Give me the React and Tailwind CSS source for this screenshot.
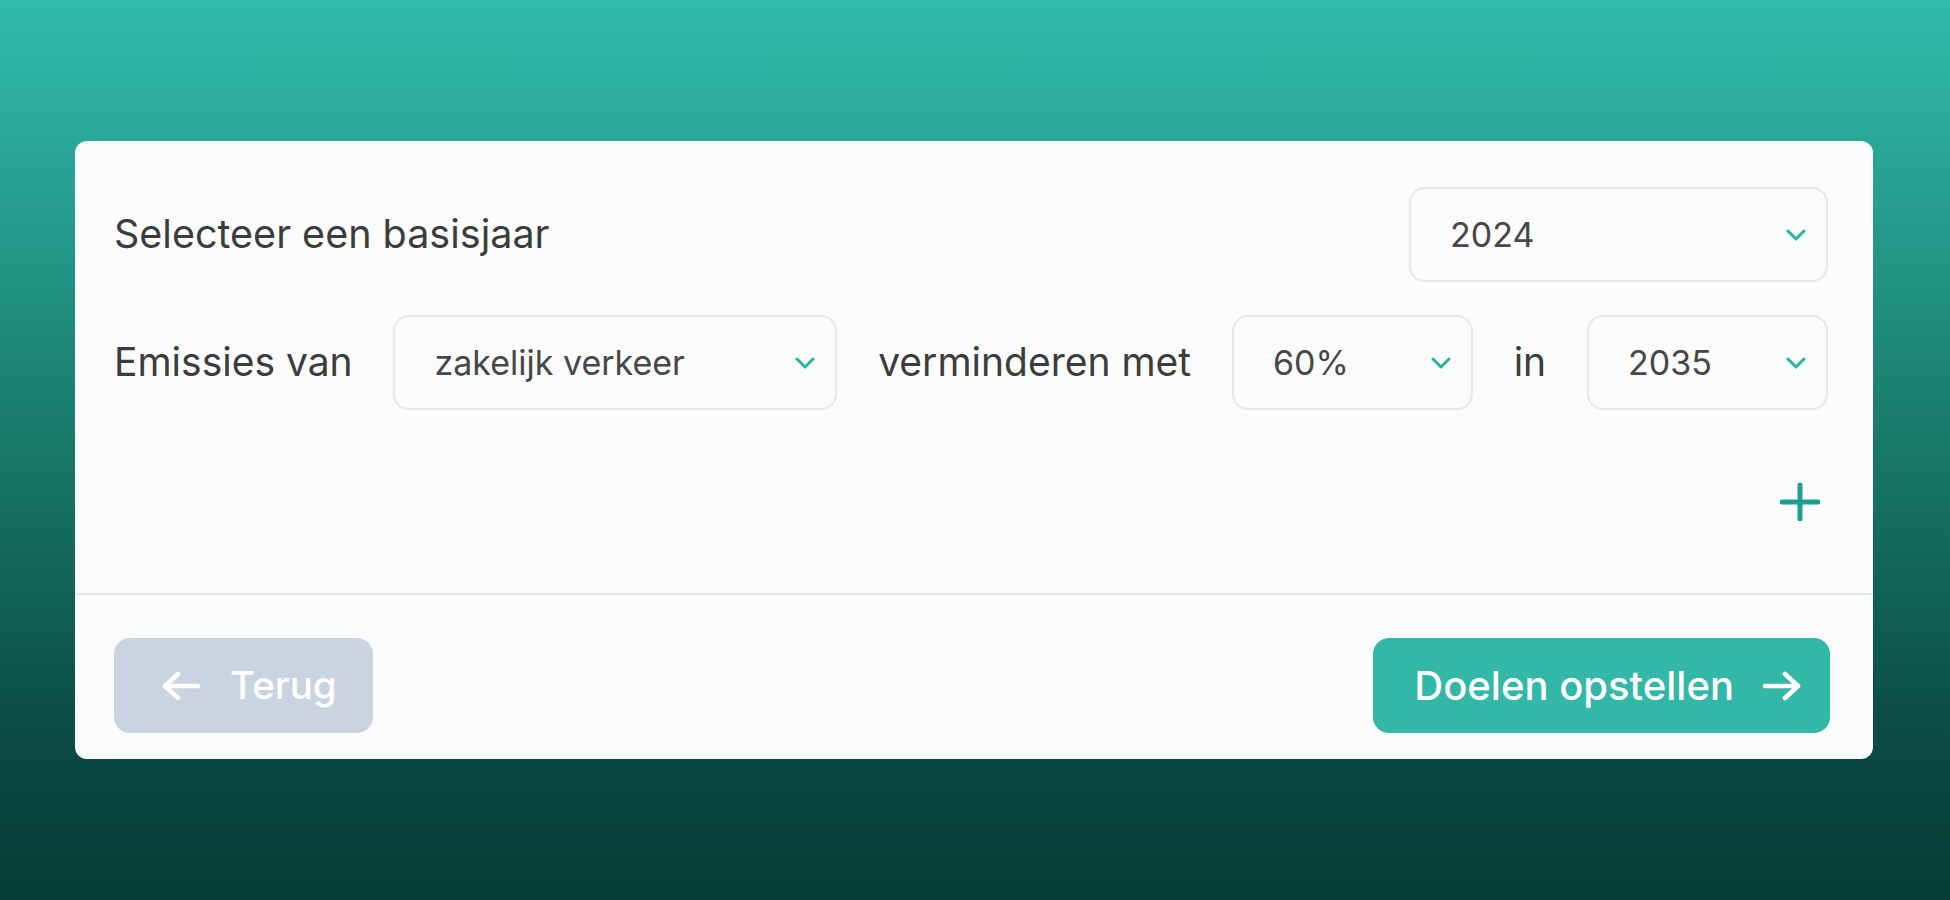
import React from 'react';

const FONT = { fontFamily: '"Inter", "Liberation Sans", sans-serif' };

function Chevron() {
  return (
    <svg width="20" height="12" viewBox="0 0 20 12" fill="none" className="shrink-0">
      <polyline points="2,2 10,10 18,2" stroke="#2ab3a3" strokeWidth="3" strokeLinecap="round" strokeLinejoin="round" />
    </svg>
  );
}

function Arrow({ left }) {
  return (
    <svg width="38" height="30" viewBox="0 0 38 30" fill="none" className="shrink-0">
      {left ? (
        <>
          <line x1="3" y1="15" x2="36" y2="15" stroke="white" strokeWidth="4.5" strokeLinecap="round" />
          <polyline points="16,3 3,15 16,27" stroke="white" strokeWidth="4.5" strokeLinecap="round" strokeLinejoin="round" />
        </>
      ) : (
        <>
          <line x1="2" y1="15" x2="35" y2="15" stroke="white" strokeWidth="4.5" strokeLinecap="round" />
          <polyline points="22,3 35,15 22,27" stroke="white" strokeWidth="4.5" strokeLinecap="round" strokeLinejoin="round" />
        </>
      )}
    </svg>
  );
}

function Select({ value, width }) {
  return (
    <div className={`${width} h-[95px] shrink-0 flex items-center justify-between pl-[39px] pr-[20px] rounded-[16px] border-2 border-[#e4e8eb] bg-[#fafbfb]`}>
      <span className="text-[34px] text-[#474747]">{value}</span>
      <Chevron />
    </div>
  );
}

export default function App() {
  return (
    <div
      className="w-[1950px] h-[900px] pt-[141px] pl-[75px] bg-[linear-gradient(180deg,#33bcaa_0%,#2aa797_16%,#187868_50%,#0b4d45_80%,#063b35_100%)]"
      style={FONT}
    >
      <div className="w-[1798px] h-[618px] rounded-[12px] bg-[#fafbfb] flex flex-col">
        {/* Form */}
        <div className="h-[454px] pt-[46px] pl-[39px] pr-[45px] border-b-2 border-[#e3e8eb] flex flex-col">
          <div className="flex items-center justify-between">
            <span className="text-[39.5px] text-[#3c3c3c]">Selecteer een basisjaar</span>
            <Select value="2024" width="w-[419px]" />
          </div>

          <div className="mt-[33px] flex items-center justify-between">
            <span className="text-[39px] text-[#3c3c3c] whitespace-nowrap">Emissies van</span>
            <Select value="zakelijk verkeer" width="w-[444px]" />
            <span className="text-[39px] text-[#3c3c3c] whitespace-nowrap">verminderen met</span>
            <Select value="60%" width="w-[241px]" />
            <span className="text-[39px] text-[#3c3c3c]">in</span>
            <Select value="2035" width="w-[241px]" />
          </div>

          <div className="mt-[73px] flex justify-end pr-[8px]">
            <svg width="40" height="38" viewBox="0 0 40 38" fill="none">
              <line x1="20" y1="2" x2="20" y2="36" stroke="#1f9e8e" strokeWidth="5" strokeLinecap="round" />
              <line x1="2" y1="19" x2="38" y2="19" stroke="#1f9e8e" strokeWidth="5" strokeLinecap="round" />
            </svg>
          </div>
        </div>

        {/* Footer */}
        <div className="pt-[43px] pl-[39px] pr-[43px] flex items-center justify-between">
          <button className="h-[95px] w-[259px] flex items-center gap-[30px] pl-[48px] rounded-[16px] bg-[#cad4e0] text-white text-[38.5px] font-medium">
            <Arrow left />
            <span>Terug</span>
          </button>
          <button className="h-[95px] w-[457px] flex items-center justify-end gap-[29px] pr-[29px] rounded-[16px] bg-[#33b7a7] text-white text-[40px] font-medium">
            <span>Doelen opstellen</span>
            <Arrow />
          </button>
        </div>
      </div>
    </div>
  );
}
